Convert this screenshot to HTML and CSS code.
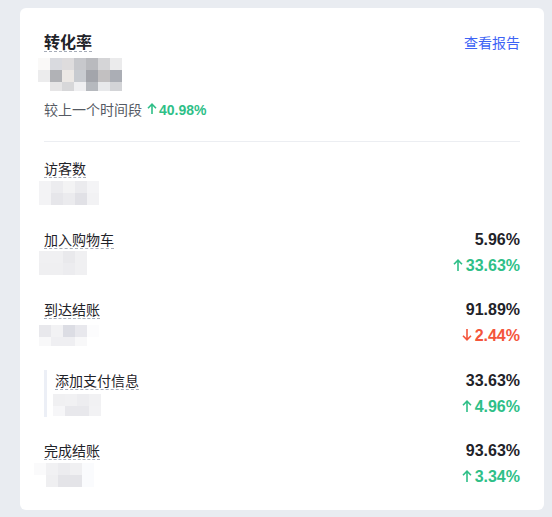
FILE: index.html
```html
<!DOCTYPE html>
<html lang="zh-CN">
<head>
<meta charset="utf-8">
<title>转化率</title>
<link rel="stylesheet" href="styles.css">
</head>
<body>
<div class="card">
  <div class="head">
    <span class="title dashed">转化率</span>
    <a class="link" href="#">查看报告</a>
  </div>
  <div class="blur b-title">
    <i style="background:#faf9f8"></i><i style="background:#d9dadf"></i><i style="background:#dedcdd"></i><i style="background:#c7c8cc"></i><i style="background:#b9babe"></i><i style="background:#d5d5d7"></i><i style="background:#ebebec"></i>
    <i style="background:#ececed"></i><i style="background:#b1b2b6"></i><i style="background:#ece8e5"></i><i style="background:#c8cbd0"></i><i style="background:#a3a5ab"></i><i style="background:#c2c0c1"></i><i style="background:#abaeb5"></i>
    <i></i><i style="background:#e6e5e6"></i><i style="background:#d7d7d9"></i><i style="background:#efeff1"></i><i style="background:#b6b9be"></i><i style="background:#e8e9eb"></i><i style="background:#d3d4d7"></i>
  </div>
  <div class="compare">较上一个时间段<span class="delta up small"><svg class="arrow" viewBox="0 0 10 11"><path d="M5 11V1.2M1 5.2L5 1.2L9 5.2"/></svg>40.98%</span></div>
  <div class="divider"></div>
  <div class="rows">
    <div class="row">
      <div class="left">
        <span class="label dashed">访客数</span>
        <div class="blur b-visit">
          <i style="background:#f3f3f5"></i><i style="background:#ececef"></i><i style="background:#f3f3f4"></i><i style="background:#ebebee"></i><i style="background:#f4f4f6"></i>
          <i style="background:#f3f3f5"></i><i style="background:#e6e6ea"></i><i style="background:#ebebee"></i><i style="background:#e1e1e6"></i><i style="background:#f2f2f4"></i>
        </div>
      </div>
    </div>
    <div class="row">
      <div class="left">
        <span class="label dashed">加入购物车</span>
        <div class="blur b-cart">
          <i style="background:#f0f0f2"></i><i style="background:#f0f0f2"></i><i style="background:#e9e9ec"></i><i style="background:#f0f0f2"></i>
          <i style="background:#efeff1"></i><i style="background:#efeff1"></i><i style="background:#ececef"></i><i style="background:#f0f0f2"></i>
        </div>
      </div>
      <div class="right">
        <div class="value">5.96%</div>
        <div class="delta up"><svg class="arrow" viewBox="0 0 10 12"><path d="M5 12V1.2M1 5.2L5 1.2L9 5.2"/></svg>33.63%</div>
      </div>
    </div>
    <div class="row">
      <div class="left">
        <span class="label dashed">到达结账</span>
        <div class="blur b-check">
          <i style="background:#e8e8ec"></i><i style="background:#f2f2f4"></i><i style="background:#dcdde4"></i><i style="background:#e8e8ed"></i><i style="background:#fcfcfd"></i>
          <i style="background:#f8f8f9"></i><i style="background:#efeff2"></i><i style="background:#efeff2"></i><i style="background:#f8f8f9"></i><i></i>
        </div>
      </div>
      <div class="right">
        <div class="value">91.89%</div>
        <div class="delta down"><svg class="arrow" viewBox="0 0 10 12"><path d="M5 0V10.8M1 6.8L5 10.8L9 6.8"/></svg>2.44%</div>
      </div>
    </div>
    <div class="row">
      <div class="left nested">
        <span class="label dashed">添加支付信息</span>
        <div class="blur b-pay">
          <i style="background:#f0f0f2"></i><i style="background:#f1f1f3"></i><i style="background:#ededf0"></i><i style="background:#f1f1f3"></i>
          <i style="background:#f6f6f8"></i><i style="background:#e8e8ec"></i><i style="background:#e8e8ec"></i><i style="background:#f2f2f4"></i>
        </div>
      </div>
      <div class="right">
        <div class="value">33.63%</div>
        <div class="delta up"><svg class="arrow" viewBox="0 0 10 12"><path d="M5 12V1.2M1 5.2L5 1.2L9 5.2"/></svg>4.96%</div>
      </div>
    </div>
    <div class="row">
      <div class="left">
        <span class="label dashed">完成结账</span>
        <div class="blur b-done">
          <i style="background:#fafafb"></i><i style="background:#f1f1f3"></i><i style="background:#ececef"></i><i style="background:#f0f0f2"></i><i style="background:#fafbfd"></i>
          <i></i><i style="background:#efeff1"></i><i style="background:#e4e4e8"></i><i style="background:#e4e4e8"></i><i style="background:#fafbfd"></i>
        </div>
      </div>
      <div class="right">
        <div class="value">93.63%</div>
        <div class="delta up"><svg class="arrow" viewBox="0 0 10 12"><path d="M5 12V1.2M1 5.2L5 1.2L9 5.2"/></svg>3.34%</div>
      </div>
    </div>
  </div>
</div>
</body>
</html>
```

FILE: styles.css
```css
* { box-sizing: border-box; }

html, body {
  margin: 0;
  padding: 0;
  background: #e9ecf1;
}

body {
  font-family: "Noto Sans CJK SC", "Liberation Sans", sans-serif;
  color: #1f2329;
}

.card {
  margin: 8px 0 0 20px;
  width: 524px;
  height: 502px;
  background: #ffffff;
  border-radius: 6px;
  padding: 24px 24px 0;
}

.head {
  display: flex;
  justify-content: space-between;
  align-items: flex-start;
}

.title {
  font-size: 16px;
  line-height: 19px;
  font-weight: 700;
  color: #1f2329;
}

.link {
  font-size: 14px;
  line-height: 20px;
  color: #3d63f5;
  text-decoration: none;
}

.dashed {
  display: inline-block;
  border-bottom: 1px dashed #a7adb9;
}

.blur {
  display: grid;
  grid-auto-rows: 12px;
}

.blur i {
  display: block;
}

.b-title {
  grid-template-columns: repeat(7, 12px);
  grid-template-rows: 12px 12px 9px;
  margin: 6px 0 0 -6px;
  width: 84px;
}

.b-visit {
  grid-template-columns: repeat(5, 12px);
  margin: 3px 0 0 -5px;
}

.b-cart {
  grid-template-columns: repeat(4, 12px);
  margin: 2.5px 0 0 -5px;
}

.b-check {
  grid-template-columns: repeat(5, 12px);
  grid-template-rows: 12px 9px;
  margin: 6px 0 0 -5px;
}

.b-pay {
  grid-template-columns: repeat(4, 12px);
  grid-template-rows: 12px 10px;
  margin: 4.5px 0 0 -2px;
}

.b-done {
  grid-template-columns: repeat(5, 12px);
  margin: 3px 0 0 -10px;
}

.compare {
  margin-top: 8px;
  font-size: 14px;
  line-height: 20px;
  color: #555a63;
}

.delta {
  font-family: "Liberation Sans", "Noto Sans CJK SC", sans-serif;
  font-weight: 700;
}

.delta.small {
  font-size: 14px;
  margin-left: 4.5px;
}

.delta.small .arrow {
  width: 10px;
  height: 11px;
  vertical-align: 1px;
}

.up { color: #2fbf88; }
.down { color: #f4553b; }

.arrow {
  width: 10px;
  height: 12px;
  margin-right: 2.5px;
  vertical-align: 0;
}

.arrow path {
  fill: none;
  stroke: currentColor;
  stroke-width: 1.6;
}

.divider {
  margin-top: 21px;
  height: 1px;
  background: #eceef2;
}

.rows {
  margin-top: 16px;
  display: flex;
  flex-direction: column;
  gap: 22.5px;
}

.row {
  display: flex;
  justify-content: space-between;
  align-items: flex-start;
  min-height: 48px;
}

.left {
  display: flex;
  flex-direction: column;
  align-items: flex-start;
  padding-top: 2px;
  min-height: 48px;
}

.left.nested {
  border-left: 3px solid #eceff6;
  padding-left: 8px;
  min-height: 47px;
}

.label {
  font-size: 14px;
  line-height: 17px;
  color: #1f2329;
}

.right {
  text-align: right;
  font-family: "Liberation Sans", sans-serif;
}

.value {
  font-size: 16px;
  line-height: 22px;
  font-weight: 700;
  color: #1f2329;
}

.right .delta {
  margin-top: 4px;
  font-size: 16px;
  line-height: 22px;
}
```
